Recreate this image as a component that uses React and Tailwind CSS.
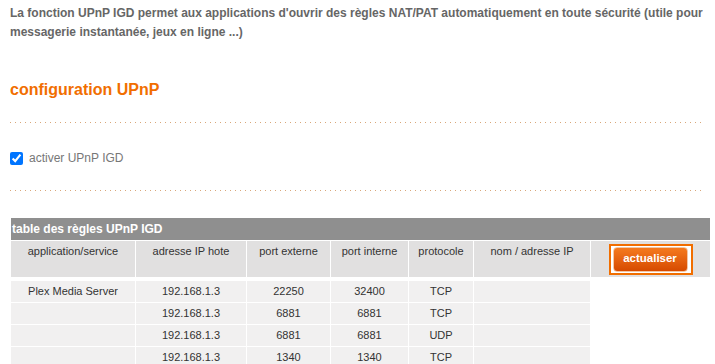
const columns = [
  'application/service',
  'adresse IP hote',
  'port externe',
  'port interne',
  'protocole',
  'nom / adresse IP',
];

const rules = [
  { app: 'Plex Media Server', ip: '192.168.1.3', ext: '22250', int: '32400', proto: 'TCP', name: '' },
  { app: '', ip: '192.168.1.3', ext: '6881', int: '6881', proto: 'TCP', name: '' },
  { app: '', ip: '192.168.1.3', ext: '6881', int: '6881', proto: 'UDP', name: '' },
  { app: '', ip: '192.168.1.3', ext: '1340', int: '1340', proto: 'TCP', name: '' },
];

const grid = 'grid grid-cols-[124px_110px_83px_77px_64px_116px_119px] gap-x-px';

const Dots = () => (
  <div className="h-px w-full bg-[linear-gradient(to_right,#d9a77a_1px,transparent_1px)] bg-[length:5px_1px]" />
);

export default function App() {
  return (
    <div className="min-h-screen w-[715px] bg-white px-[10px] pt-[4px] font-['Liberation_Sans',Arial,sans-serif]">
      <p className="w-[695px] text-[12px] font-bold leading-[19px] text-[#666666]">
        La fonction UPnP IGD permet aux applications d'ouvrir des règles NAT/PAT automatiquement en toute sécurité (utile pour
        messagerie instantanée, jeux en ligne ...)
      </p>

      <h2 className="mt-[38px] text-[16px] font-bold leading-[20px] text-[#f16e00]">configuration UPnP</h2>

      <div className="mt-[22px]">
        <Dots />
      </div>

      <label className="mt-[28px] flex items-center gap-[6px] text-[12px] leading-[14px] text-[#777777]">
        <input type="checkbox" defaultChecked className="m-0 h-[13px] w-[13px]" />
        activer UPnP IGD
      </label>

      <div className="mt-[25px]">
        <Dots />
      </div>

      <div className="ml-px mt-[27px] w-[699px] text-[11px] text-[#333333]">
        <div className="flex h-[22px] items-center bg-[#8f8f8f] pl-px text-[12px] font-bold text-white">
          table des règles UPnP IGD
        </div>
        <div className={`${grid} mt-px h-[36px]`}>
          {columns.map((col) => (
            <div key={col} className="bg-[#e1e0e0] pt-[4px] text-center leading-[13px]">
              {col}
            </div>
          ))}
          <div className="flex items-center justify-center bg-[#e1e0e0]">
            <div className="border-2 border-[#f16e00] bg-white py-[1px] pl-[2px] pr-[3px]">
              <button
                type="button"
                className="flex h-[25px] w-[75px] items-center justify-center rounded-[4px] border border-[#f3c7a6] bg-gradient-to-b from-[#f57a1e] to-[#d64a00] text-[11.5px] font-bold text-white"
              >
                actualiser
              </button>
            </div>
          </div>
        </div>
        <div className="mt-[4px] flex flex-col gap-y-px">
          {rules.map((r, i) => (
            <div key={i} className={`${grid} h-[21px]`}>
              {[r.app, r.ip, r.ext, r.int, r.proto, r.name].map((v, j) => (
                <div key={j} className="flex items-center justify-center bg-[#f1f0f0]">
                  {v}
                </div>
              ))}
              <div />
            </div>
          ))}
        </div>
      </div>
    </div>
  );
}
